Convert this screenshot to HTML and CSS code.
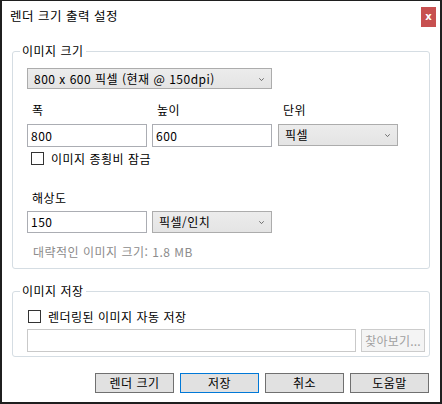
FILE: index.html
```html
<!DOCTYPE html>
<html lang="ko">
<head>
<meta charset="utf-8">
<link rel="stylesheet" href="styles.css">
</head>
<body>
<div class="window">
  <div class="titlebar">
    <span class="title">렌더 크기 출력 설정</span>
    <div class="close">x</div>
  </div>
  <div class="content">
    <fieldset class="group g1">
      <legend>이미지 크기</legend>
      <div class="inner1">
        <div class="select preset"><span>800 x 600 픽셀 (현재 @ 150dpi)</span><svg class="chev" width="5" height="3" viewBox="0 0 5 3"><path d="M0.3 0.3 L2.5 2.6 L4.7 0.3" fill="none" stroke="#606060" stroke-width="0.9"/></svg></div>
        <div class="grid">
          <div class="lbl">폭</div>
          <div class="lbl">높이</div>
          <div class="lbl">단위</div>
          <div class="field">800</div>
          <div class="field">600</div>
          <div class="select unit"><span>픽셀</span><svg class="chev" width="5" height="3" viewBox="0 0 5 3"><path d="M0.3 0.3 L2.5 2.6 L4.7 0.3" fill="none" stroke="#606060" stroke-width="0.9"/></svg></div>
        </div>
        <div class="check c1"><span class="box"></span><span>이미지 종횡비 잠금</span></div>
        <div class="lbl res">해상도</div>
        <div class="resrow">
          <div class="field">150</div>
          <div class="select unit"><span>픽셀/인치</span><svg class="chev" width="5" height="3" viewBox="0 0 5 3"><path d="M0.3 0.3 L2.5 2.6 L4.7 0.3" fill="none" stroke="#606060" stroke-width="0.9"/></svg></div>
        </div>
        <div class="note">대략적인 이미지 크기: 1.8 MB</div>
      </div>
    </fieldset>
    <fieldset class="group g2">
      <legend>이미지 저장</legend>
      <div class="inner2">
        <div class="check c2"><span class="box"></span><span>렌더링된 이미지 자동 저장</span></div>
        <div class="pathrow">
          <div class="field path"></div>
          <div class="browse">찾아보기...</div>
        </div>
      </div>
    </fieldset>
    <div class="buttons">
      <div class="btn">렌더 크기</div>
      <div class="btn default">저장</div>
      <div class="btn">취소</div>
      <div class="btn">도움말</div>
    </div>
  </div>
</div>
</body>
</html>
```

FILE: styles.css
```css
* { box-sizing: border-box; }
html, body { margin: 0; padding: 0; background: #ffffff; }
body {
  font-family: "Noto Sans CJK KR", "Noto Sans", sans-serif;
  font-size: 12px;
  letter-spacing: 0.5px;
  color: #000;
}
.window {
  width: 442px;
  height: 404px;
  border-style: solid;
  border-color: #1f1f1f;
  border-width: 1px 2px 2px 2px;
  background: #fff;
  display: flex;
  flex-direction: column;
}
.titlebar {
  height: 30px;
  display: flex;
  align-items: flex-start;
  justify-content: space-between;
  padding: 0 4px 0 8px;
}
.title {
  line-height: 30px;
  font-size: 12.5px;
}
.close {
  margin-top: 6px;
  width: 15px;
  height: 20px;
  background: #c75050;
  color: #fff;
  font-family: "DejaVu Sans", sans-serif;
  font-weight: bold;
  font-size: 10px;
  letter-spacing: 0;
  line-height: 19px;
  text-align: center;
}
.content {
  padding: 12px 10px 0 10px;
  display: flex;
  flex-direction: column;
}
.group {
  margin: 0;
  padding: 0;
  border: 1px solid #d5dde3;
  border-radius: 3px;
  min-width: 0;
}
.group legend {
  margin-left: 7px;
  padding: 0 2px;
  line-height: 16px;
  font-size: 12px;
}
.inner1 { padding: 9px 0 8px 14px; display: flex; flex-direction: column; }
.g2 { margin-top: 14px; }
.inner2 { padding: 9px 0 4px 14px; display: flex; flex-direction: column; }

.select {
  height: 21px;
  border: 1px solid #acacac;
  background: linear-gradient(#ececec, #e4e4e4);
  display: flex;
  align-items: center;
  justify-content: space-between;
  padding: 0 7px 0 5px;
  line-height: 16px;
}
.select .chev { display: block; margin-top: 1px; }
.preset { width: 245px; }
.preset span { padding-left: 1px; }
.unit { width: 120px; height: 22px; }
.unit span { padding-left: 1px; }

.grid {
  margin-top: 13px;
  display: grid;
  grid-template-columns: 125px 126px 120px;
  row-gap: 6px;
}
.lbl { line-height: 16px; padding-left: 5px; }
.field {
  width: 120px;
  height: 23px;
  border: 1px solid #abadb3;
  background: #fff;
  padding: 0 3px;
  line-height: 21px;
}
.check {
  display: flex;
  align-items: center;
  height: 17px;
}
.check .box {
  width: 13px;
  height: 13px;
  border: 1px solid #333;
  background: #fff;
  margin-right: 7px;
}
.c1 { margin-top: 3px; padding-left: 4px; }
.c2 { margin-top: 0; padding-left: 1px; }
.res { margin-top: 23px; }
.resrow {
  margin-top: 5px;
  display: flex;
  gap: 5px;
}
.resrow .field { height: 22px; line-height: 20px; }
.note {
  margin-top: 11px;
  line-height: 16px;
  padding-left: 6px;
  color: #8c8c8c;
}
.pathrow {
  margin-top: 4px;
  display: flex;
  gap: 5px;
}
.field.path { width: 329px; border-color: #c9c9c9; }
.browse {
  width: 64px;
  height: 23px;
  border: 1px solid #cccccc;
  background: #f4f4f4;
  color: #a0a0a0;
  text-align: center;
  line-height: 21px;
  letter-spacing: 0.2px;
}
.buttons {
  margin-top: 16px;
  display: flex;
  justify-content: flex-end;
  gap: 6px;
  padding-right: 1px;
}
.btn {
  width: 79px;
  height: 20px;
  border: 1px solid #707070;
  background: #e1e1e1;
  text-align: center;
  line-height: 18px;
}
.btn.default { border-color: #0078d7; }
```
